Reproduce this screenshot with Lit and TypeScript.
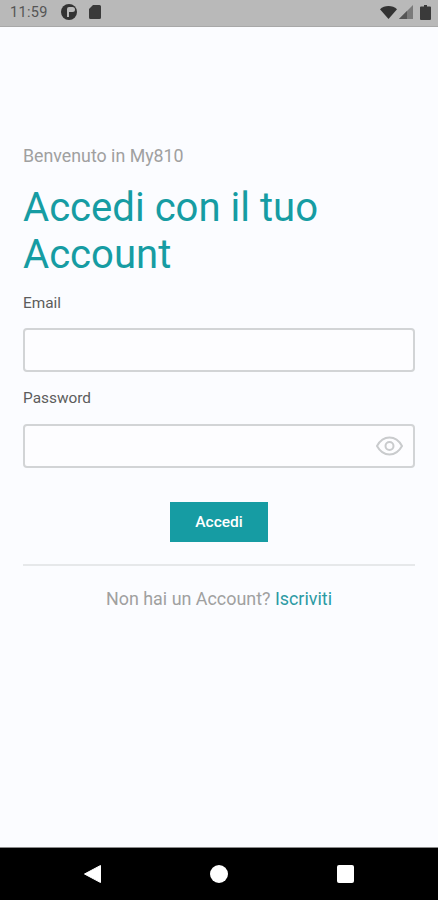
import { LitElement, html, css } from 'lit';
import { customElement } from 'lit/decorators.js';

@customElement('app-root')
export class AppRoot extends LitElement {
  static styles = css`
    :host {
      display: flex;
      flex-direction: column;
      height: 900px;
      background: #fbfcff;
      font-family: Roboto, 'Liberation Sans', sans-serif;
    }
    .status {
      height: 27px;
      flex: none;
      box-sizing: border-box;
      background: #b9b9b9;
      border-bottom: 1px solid #a8a8a8;
      display: flex;
      align-items: center;
      padding: 0 7px 2px 10px;
      color: #555;
      font-size: 14.5px;
    }
    .status .time {
      letter-spacing: 0.3px;
      margin-right: 13px;
    }
    .status svg {
      display: block;
      flex: none;
    }
    .status .card {
      margin-left: 12px;
    }
    .status .spacer {
      flex: 1;
    }
    .status .signal {
      margin: 0 7px 0 2px;
    }
    main {
      flex: 1;
      box-sizing: border-box;
      padding: 119px 23px 0;
      display: flex;
      flex-direction: column;
    }
    .welcome {
      font-size: 17.8px;
      line-height: 20px;
      color: #a0a0a0;
    }
    h1 {
      margin: 18px 0 0;
      font-size: 40.1px;
      line-height: 47px;
      font-weight: 400;
      color: #169ca3;
    }
    label {
      display: block;
      font-size: 15.4px;
      line-height: 18px;
      color: #5c5c5c;
    }
    .email-label {
      margin-top: 16px;
    }
    .password-label {
      margin-top: 17px;
    }
    .field {
      margin-top: 16px;
      height: 44px;
      box-sizing: border-box;
      border: 2px solid #d2d4d6;
      border-radius: 4px;
      background: #fdfdff;
      display: flex;
      align-items: center;
      justify-content: flex-end;
      padding-right: 10px;
    }
    .password-label + .field {
      margin-top: 17px;
    }
    .field svg {
      display: block;
    }
    .submit {
      align-self: center;
      margin-top: 34px;
      width: 98px;
      height: 40px;
      border: none;
      background: #169ca3;
      color: #fff;
      font: 500 15.5px Roboto, 'Liberation Sans', sans-serif;
      padding: 0;
    }
    hr {
      margin: 22px 0 0;
      border: none;
      height: 2px;
      background: #e6e8ea;
    }
    .signup {
      margin-top: 23px;
      text-align: center;
      font-size: 17.9px;
      line-height: 20px;
      color: #a0a0a0;
    }
    .signup a {
      color: #2a9aa3;
      text-decoration: none;
    }
    .nav {
      height: 53px;
      flex: none;
      background: #000;
      border-top: 1px solid #8a8a8a;
      box-sizing: border-box;
      display: flex;
      align-items: center;
      justify-content: space-between;
      padding: 0 84px 0 84px;
    }
    .nav svg {
      display: block;
    }
  `;

  render() {
    return html`
      <div class="status">
        <span class="time">11:59</span>
        <svg width="16" height="16" viewBox="0 0 16 16">
          <circle cx="8" cy="8" r="8" fill="#333"></circle>
          <path d="M8 3h3.500a2.500 2.500 0 0 1 0 5H8v5H6V5a2 2 0 0 1 2-2z" fill="#b9b9b9"></path>
        </svg>
        <svg class="card" width="12" height="14" viewBox="0 0 12 14">
          <path d="M4 0h6.500A1.500 1.500 0 0 1 12 1.500v11a1.500 1.500 0 0 1-1.500 1.500h-9A1.500 1.500 0 0 1 0 12.500V4z" fill="#3a3a3a"></path>
        </svg>
        <span class="spacer"></span>
        <svg width="17" height="13" viewBox="0 0 17 13">
          <path d="M0 3.200C2.300 1.200 5.200 0 8.500 0S14.700 1.200 17 3.200L8.500 13z" fill="#333"></path>
        </svg>
        <svg class="signal" width="14" height="14" viewBox="0 0 14 14">
          <path d="M14 0v14H0z" fill="#7a7a7a"></path>
          <path d="M8 6v8H0z" fill="#555"></path>
        </svg>
        <svg width="11" height="15" viewBox="0 0 11 15">
          <path d="M4 0h3v1.500h3a1 1 0 0 1 1 1V14a1 1 0 0 1-1 1H1a1 1 0 0 1-1-1V2.500a1 1 0 0 1 1-1h3z" fill="#3a3a3a"></path>
        </svg>
      </div>
      <main>
        <div class="welcome">Benvenuto in My810</div>
        <h1>Accedi con il tuo Account</h1>
        <label class="email-label">Email</label>
        <div class="field"></div>
        <label class="password-label">Password</label>
        <div class="field">
          <svg width="27" height="20" viewBox="0 0 27 20" fill="none" stroke="#c9cbcd" stroke-width="2">
            <path d="M1 10C4 4.500 8.500 1.500 13.500 1.500S23 4.500 26 10c-3 5.500-7.500 8.500-12.500 8.500S4 15.500 1 10z"></path>
            <circle cx="13.500" cy="10" r="4"></circle>
          </svg>
        </div>
        <button class="submit">Accedi</button>
        <hr />
        <div class="signup">Non hai un Account? <a>Iscriviti</a></div>
      </main>
      <div class="nav">
        <svg width="17" height="18" viewBox="0 0 17 18">
          <path d="M16.500 0.500v17L0.500 9z" fill="#fff" stroke="#fff" stroke-linejoin="round"></path>
        </svg>
        <svg width="18" height="18" viewBox="0 0 18 18">
          <circle cx="9" cy="9" r="9" fill="#fff"></circle>
        </svg>
        <svg width="17" height="18" viewBox="0 0 17 18">
          <rect width="17" height="18" rx="2" fill="#fff"></rect>
        </svg>
      </div>
    `;
  }
}
